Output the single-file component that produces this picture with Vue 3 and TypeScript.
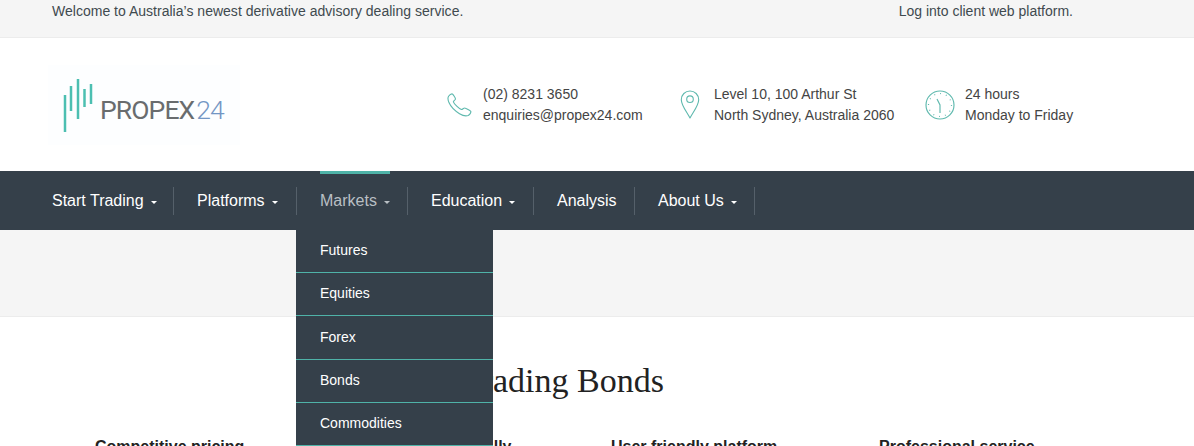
<script setup lang="ts">
interface NavItem { label: string; caret: boolean; width: number; active?: boolean }
const nav: NavItem[] = [
  { label: 'Start Trading', caret: true, width: 145 },
  { label: 'Platforms', caret: true, width: 123 },
  { label: 'Markets', caret: true, width: 111, active: true },
  { label: 'Education', caret: true, width: 126 },
  { label: 'Analysis', caret: false, width: 101 },
  { label: 'About Us', caret: true, width: 120 },
]
const menu: string[] = ['Futures', 'Equities', 'Forex', 'Bonds', 'Commodities']
const features: string[] = ['Competitive pricing', 'Trade internationally', 'User friendly platform', 'Professional service']
const bars: { x: number; y1: number; y2: number }[] = [
  { x: 65, y1: 95, y2: 132 },
  { x: 71, y1: 86, y2: 111 },
  { x: 78, y1: 79, y2: 119 },
  { x: 84.5, y1: 89, y2: 107 },
  { x: 91, y1: 84, y2: 104 },
]
</script>

<template>
  <div class="page">
    <div class="topbar">
      <span class="welcome">Welcome to Australia’s newest derivative advisory dealing service.</span>
      <span class="login">Log into client web platform.</span>
    </div>

    <header class="header">
      <div class="logo-slot">
        <div class="logo">
          <svg class="logo-bars" width="40" height="66" viewBox="60 72 40 66">
            <line v-for="b in bars" :key="b.x" :x1="b.x" :x2="b.x" :y1="b.y1" :y2="b.y2" stroke="#4cbfb1" stroke-width="2.5" />
          </svg>
          <span class="logo-text">PROPEX<span class="logo-num">24</span></span>
        </div>
      </div>
      <div class="contacts">
        <div class="contact phone">
          <svg width="25" height="24" viewBox="0 0 26 25" fill="none" stroke="#5fb9ae" stroke-width="1.15" stroke-linejoin="round">
            <path d="M1.6 3.4 C2.8 1.8 4.6 0.8 5.6 1 C6.4 1.4 8.8 5.4 8.8 6.2 C8.8 7.2 6.6 8.2 6.6 9.2 C7.4 11.4 12.4 16.2 15 17.2 C16 17.4 17.4 15.4 18.4 15.6 C19.6 15.8 24.4 18.2 24.8 19.2 C25.2 20.4 23.6 22.6 22 23.4 C20 24.2 16.4 23.6 13 21.6 C8.4 18.8 4 14.4 2 10 C1 7.6 0.6 5 1.6 3.4 Z" />
          </svg>
          <div class="lines"><div>(02) 8231 3650</div><div>enquiries@propex24.com</div></div>
        </div>
        <div class="contact pin">
          <svg width="20" height="29" viewBox="0 0 20 30" fill="none" stroke="#5fb9ae" stroke-width="1.15">
            <path d="M10 29 C7 23 1 16 1 10 A9 9 0 0 1 19 10 C19 16 13 23 10 29 Z" stroke-linejoin="round" />
            <circle cx="10" cy="9.5" r="3.4" />
          </svg>
          <div class="lines"><div>Level 10, 100 Arthur St</div><div>North Sydney, Australia 2060</div></div>
        </div>
        <div class="contact clock">
          <svg width="30" height="30" viewBox="0 0 30 30" fill="none" stroke="#5fb9ae">
            <circle cx="15" cy="15" r="14" stroke-width="1.15" />
            <circle cx="15" cy="15" r="11.5" stroke-width="1.2" stroke-dasharray="0.9 5.1" />
            <path d="M15 23 V15 L12 9" stroke-width="1.15" />
          </svg>
          <div class="lines"><div>24 hours</div><div>Monday to Friday</div></div>
        </div>
      </div>
    </header>

    <nav class="nav">
      <div
        v-for="item in nav"
        :key="item.label"
        class="nav-item"
        :class="{ active: item.active }"
        :style="{ width: item.width + 'px' }"
      >
        <span class="nav-link">
          {{ item.label }}<i v-if="item.caret" class="caret"></i>
        </span>
        <ul v-if="item.active" class="dropdown">
          <li v-for="m in menu" :key="m">{{ m }}</li>
        </ul>
      </div>
    </nav>

    <div class="band"></div>

    <main class="content">
      <h1>Trading Bonds</h1>
      <div class="features">
        <strong v-for="f in features" :key="f">{{ f }}</strong>
      </div>
    </main>
  </div>
</template>

<style>
html, body { margin: 0; overflow: hidden; background: #fff; }
</style>

<style scoped>
.page {
  width: 1194px;
  height: 446px;
  overflow: hidden;
  font-family: "Liberation Sans", Arial, sans-serif;
  color: #444;
}
.topbar {
  box-sizing: border-box;
  height: 38px;
  padding: 3px 121px 0 52px;
  display: flex;
  justify-content: space-between;
  background: #f5f5f5;
  border-bottom: 1px solid #ececec;
  font-size: 14px;
  line-height: 17px;
  color: #3f4a4f;
}
.welcome { letter-spacing: 0.015px; }
.header {
  height: 133px;
  display: flex;
  align-items: center;
  padding-left: 48px;
}
.logo-slot { width: 399px; flex: none; }
.logo {
  box-sizing: border-box;
  width: 192px;
  height: 80px;
  padding: 7px 0 7px 12px;
  display: flex;
  align-items: flex-end;
  background: #fdfeff;
}
.logo-bars { flex: none; margin-left: 0; }
.logo-text {
  font-family: Roboto, sans-serif;
  font-weight: 400;
  font-size: 26.5px;
  line-height: 27px;
  letter-spacing: -0.9px;
  color: #696c6e;
  margin-bottom: 15px;
}
.logo-num { color: #7396c4; font-weight: 300; margin-left: 2px; }
.contacts { display: flex; font-size: 14px; color: #444; }
.contact { display: flex; align-items: center; }
.phone svg { margin-right: 11px; }
.phone { width: 233px; }
.pin svg { margin-right: 14px; }
.pin { width: 246px; }
.clock svg { margin-right: 10px; }
.clock { margin-left: -1px; }
.lines { line-height: 21px; white-space: nowrap; }
.nav {
  height: 59px;
  background: #35404a;
  display: flex;
  padding-left: 28px;
  position: relative;
  z-index: 2;
}
.nav-item {
  box-sizing: border-box;
  flex: none;
  padding-left: 24px;
  position: relative;
}
.nav-item::after {
  content: "";
  position: absolute;
  right: -1px;
  top: 16px;
  height: 28px;
  width: 1px;
  background: #55606a;
}
.nav-link {
  display: inline-block;
  position: relative;
  height: 59px;
  line-height: 59px;
  font-size: 16px;
  color: #fff;
  white-space: nowrap;
}
.active .nav-link { color: #b9bfc4; }
.active .nav-link::before {
  content: "";
  position: absolute;
  left: 0;
  right: 0;
  top: 0;
  height: 2.5px;
  background: #4fb3a8;
}
.caret {
  display: inline-block;
  margin-left: 7px;
  vertical-align: 2px;
  border-top: 3px solid currentColor;
  border-left: 3px solid transparent;
  border-right: 3px solid transparent;
}
.dropdown {
  position: absolute;
  left: 0;
  top: 59px;
  width: 197px;
  margin: 0;
  padding: 0;
  list-style: none;
  background: #35404a;
  z-index: 1;
}
.dropdown li {
  box-sizing: border-box;
  height: 43px;
  line-height: 40px;
  padding-left: 24px;
  font-size: 14px;
  color: #fff;
  border-bottom: 1px solid #4fb3a8;
}
.dropdown li:nth-child(3) { height: 44px; line-height: 42px; }
.band {
  box-sizing: border-box;
  height: 87px;
  background: #f5f5f5;
  border-bottom: 1px solid #ececec;
}
.content { height: 129px; }
h1 {
  margin: 0;
  padding: 44px 68px 0 0;
  text-align: center;
  font-family: "Liberation Serif", serif;
  font-weight: 400;
  font-size: 34px;
  line-height: 40px;
  color: #222;
}
.features {
  display: flex;
  padding: 37px 0 0 95px;
  font-size: 16px;
  line-height: 18px;
  color: #222;
}
.features strong { box-sizing: border-box; width: 258px; flex: none; white-space: nowrap; }
.features strong:nth-child(2) { padding-left: 2px; }
.features strong:nth-child(3) { width: 268px; }
</style>
